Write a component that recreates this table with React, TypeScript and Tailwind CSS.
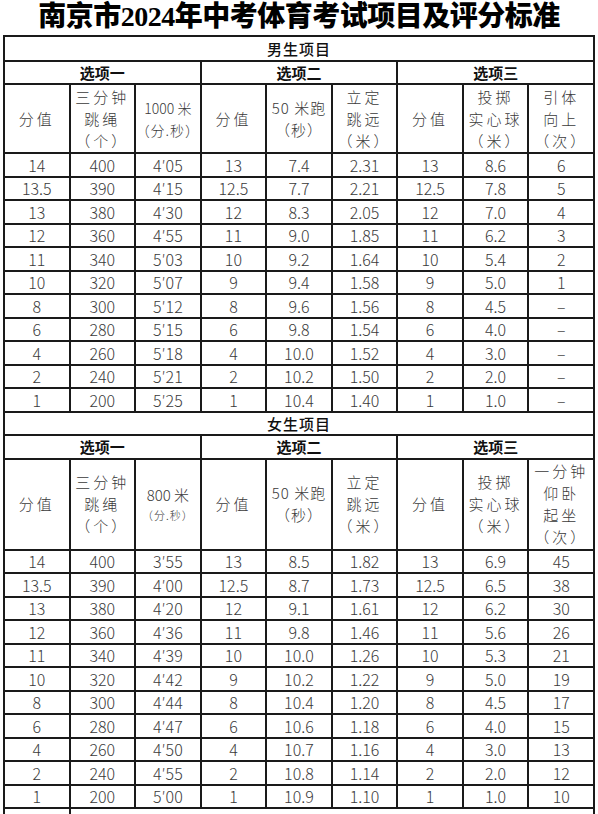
import React from 'react';

type Row = string[];

const boysRows: Row[] = [
  ['14', '400', '4′05', '13', '7.4', '2.31', '13', '8.6', '6'],
  ['13.5', '390', '4′15', '12.5', '7.7', '2.21', '12.5', '7.8', '5'],
  ['13', '380', '4′30', '12', '8.3', '2.05', '12', '7.0', '4'],
  ['12', '360', '4′55', '11', '9.0', '1.85', '11', '6.2', '3'],
  ['11', '340', '5′03', '10', '9.2', '1.64', '10', '5.4', '2'],
  ['10', '320', '5′07', '9', '9.4', '1.58', '9', '5.0', '1'],
  ['8', '300', '5′12', '8', '9.6', '1.56', '8', '4.5', '–'],
  ['6', '280', '5′15', '6', '9.8', '1.54', '6', '4.0', '–'],
  ['4', '260', '5′18', '4', '10.0', '1.52', '4', '3.0', '–'],
  ['2', '240', '5′21', '2', '10.2', '1.50', '2', '2.0', '–'],
  ['1', '200', '5′25', '1', '10.4', '1.40', '1', '1.0', '–'],
];

const girlsRows: Row[] = [
  ['14', '400', '3′55', '13', '8.5', '1.82', '13', '6.9', '45'],
  ['13.5', '390', '4′00', '12.5', '8.7', '1.73', '12.5', '6.5', '38'],
  ['13', '380', '4′20', '12', '9.1', '1.61', '12', '6.2', '30'],
  ['12', '360', '4′36', '11', '9.8', '1.46', '11', '5.6', '26'],
  ['11', '340', '4′39', '10', '10.0', '1.26', '10', '5.3', '21'],
  ['10', '320', '4′42', '9', '10.2', '1.22', '9', '5.0', '19'],
  ['8', '300', '4′44', '8', '10.4', '1.20', '8', '4.5', '17'],
  ['6', '280', '4′47', '6', '10.6', '1.18', '6', '4.0', '15'],
  ['4', '260', '4′50', '4', '10.7', '1.16', '4', '3.0', '13'],
  ['2', '240', '4′55', '2', '10.8', '1.14', '2', '2.0', '12'],
  ['1', '200', '5′00', '1', '10.9', '1.10', '1', '1.0', '10'],
];

const cell = 'border-2 border-[#1a1a1a] text-center align-middle p-0';

function Lines({ lines, cls = 'tracking-[3px]' }: { lines: string[]; cls?: string }) {
  return (
    <div className={`flex flex-col items-center text-[15px] leading-[22px] whitespace-nowrap ${cls}`}>
      {lines.map((l, i) => (
        <span key={i}>{l}</span>
      ))}
    </div>
  );
}

function Section({ title, girls }: { title: string; girls?: boolean }) {
  const rows = girls ? girlsRows : boysRows;
  return (
    <>
      <tr className={girls ? 'h-[23px]' : 'h-[25px]'}>
        <td colSpan={9} className={`${cell} text-[15px] font-medium text-[#111] tracking-[1px] leading-none`}>
          {title}
        </td>
      </tr>
      <tr className={girls ? 'h-[24px]' : 'h-[23px]'}>
        <td colSpan={3} className={`${cell} text-[15px] font-bold text-[#111] leading-none`}>选项一</td>
        <td colSpan={3} className={`${cell} text-[15px] font-bold text-[#111] leading-none`}>选项二</td>
        <td colSpan={3} className={`${cell} text-[15px] font-bold text-[#111] leading-none`}>选项三</td>
      </tr>
      <tr className={girls ? 'h-[91px]' : 'h-[69px]'}>
        <td className={cell}><Lines lines={['分值']} /></td>
        <td className={cell}><Lines lines={['三分钟', '跳绳', '（个）']} /></td>
        <td className={cell}>
          {girls ? (
            <div className="flex flex-col items-center whitespace-nowrap">
              <span className="text-[15px] leading-[22px]">800 米</span>
              <span className="text-[11px] leading-[18px] tracking-[1px]">（分.秒）</span>
            </div>
          ) : (
            <div className="flex flex-col items-center text-[14px] leading-[22px] whitespace-nowrap">
              <span>1000 米</span>
              <span className="tracking-[1px]">（分.秒）</span>
            </div>
          )}
        </td>
        <td className={cell}><Lines lines={['分值']} /></td>
        <td className={cell}><Lines lines={['50 米跑', '（秒）']} cls="tracking-[1px]" /></td>
        <td className={cell}><Lines lines={['立定', '跳远', '（米）']} /></td>
        <td className={cell}><Lines lines={['分值']} /></td>
        <td className={cell}><Lines lines={['投掷', '实心球', '（米）']} /></td>
        <td className={cell}>
          <Lines lines={girls ? ['一分钟', '仰卧', '起坐', '（次）'] : ['引体', '向上', '（次）']} />
        </td>
      </tr>
      {rows.map((r, i) => (
        <tr key={i} className="h-[23.5px]">
          {r.map((v, j) => (
            <td key={j} className={`${cell} text-[16px] leading-none`}>{v}</td>
          ))}
        </tr>
      ))}
    </>
  );
}

export default function App() {
  return (
    <div
      className="w-[598px] h-[814px] overflow-hidden bg-white text-[#3a3a3a] font-light"
      style={{ fontFamily: '"Noto Sans CJK SC", "Noto Sans", sans-serif' }}
    >
      <h1
        className="h-[35px] flex items-center justify-center pb-[2px] text-[28px] font-black text-black tracking-[-0.5px] leading-none"
        style={{ fontFamily: '"Liberation Serif", "Noto Sans CJK SC", serif' }}
      >
        南京市2024年中考体育考试项目及评分标准
      </h1>
      <table className="ml-[3px] w-[592px] border-collapse table-fixed">
        <tbody>
          <Section title="男生项目" />
          <Section title="女生项目" girls />
          <tr className="h-[40px]">
            <td className={cell}></td>
            <td colSpan={8} className={cell}></td>
          </tr>
        </tbody>
      </table>
    </div>
  );
}
